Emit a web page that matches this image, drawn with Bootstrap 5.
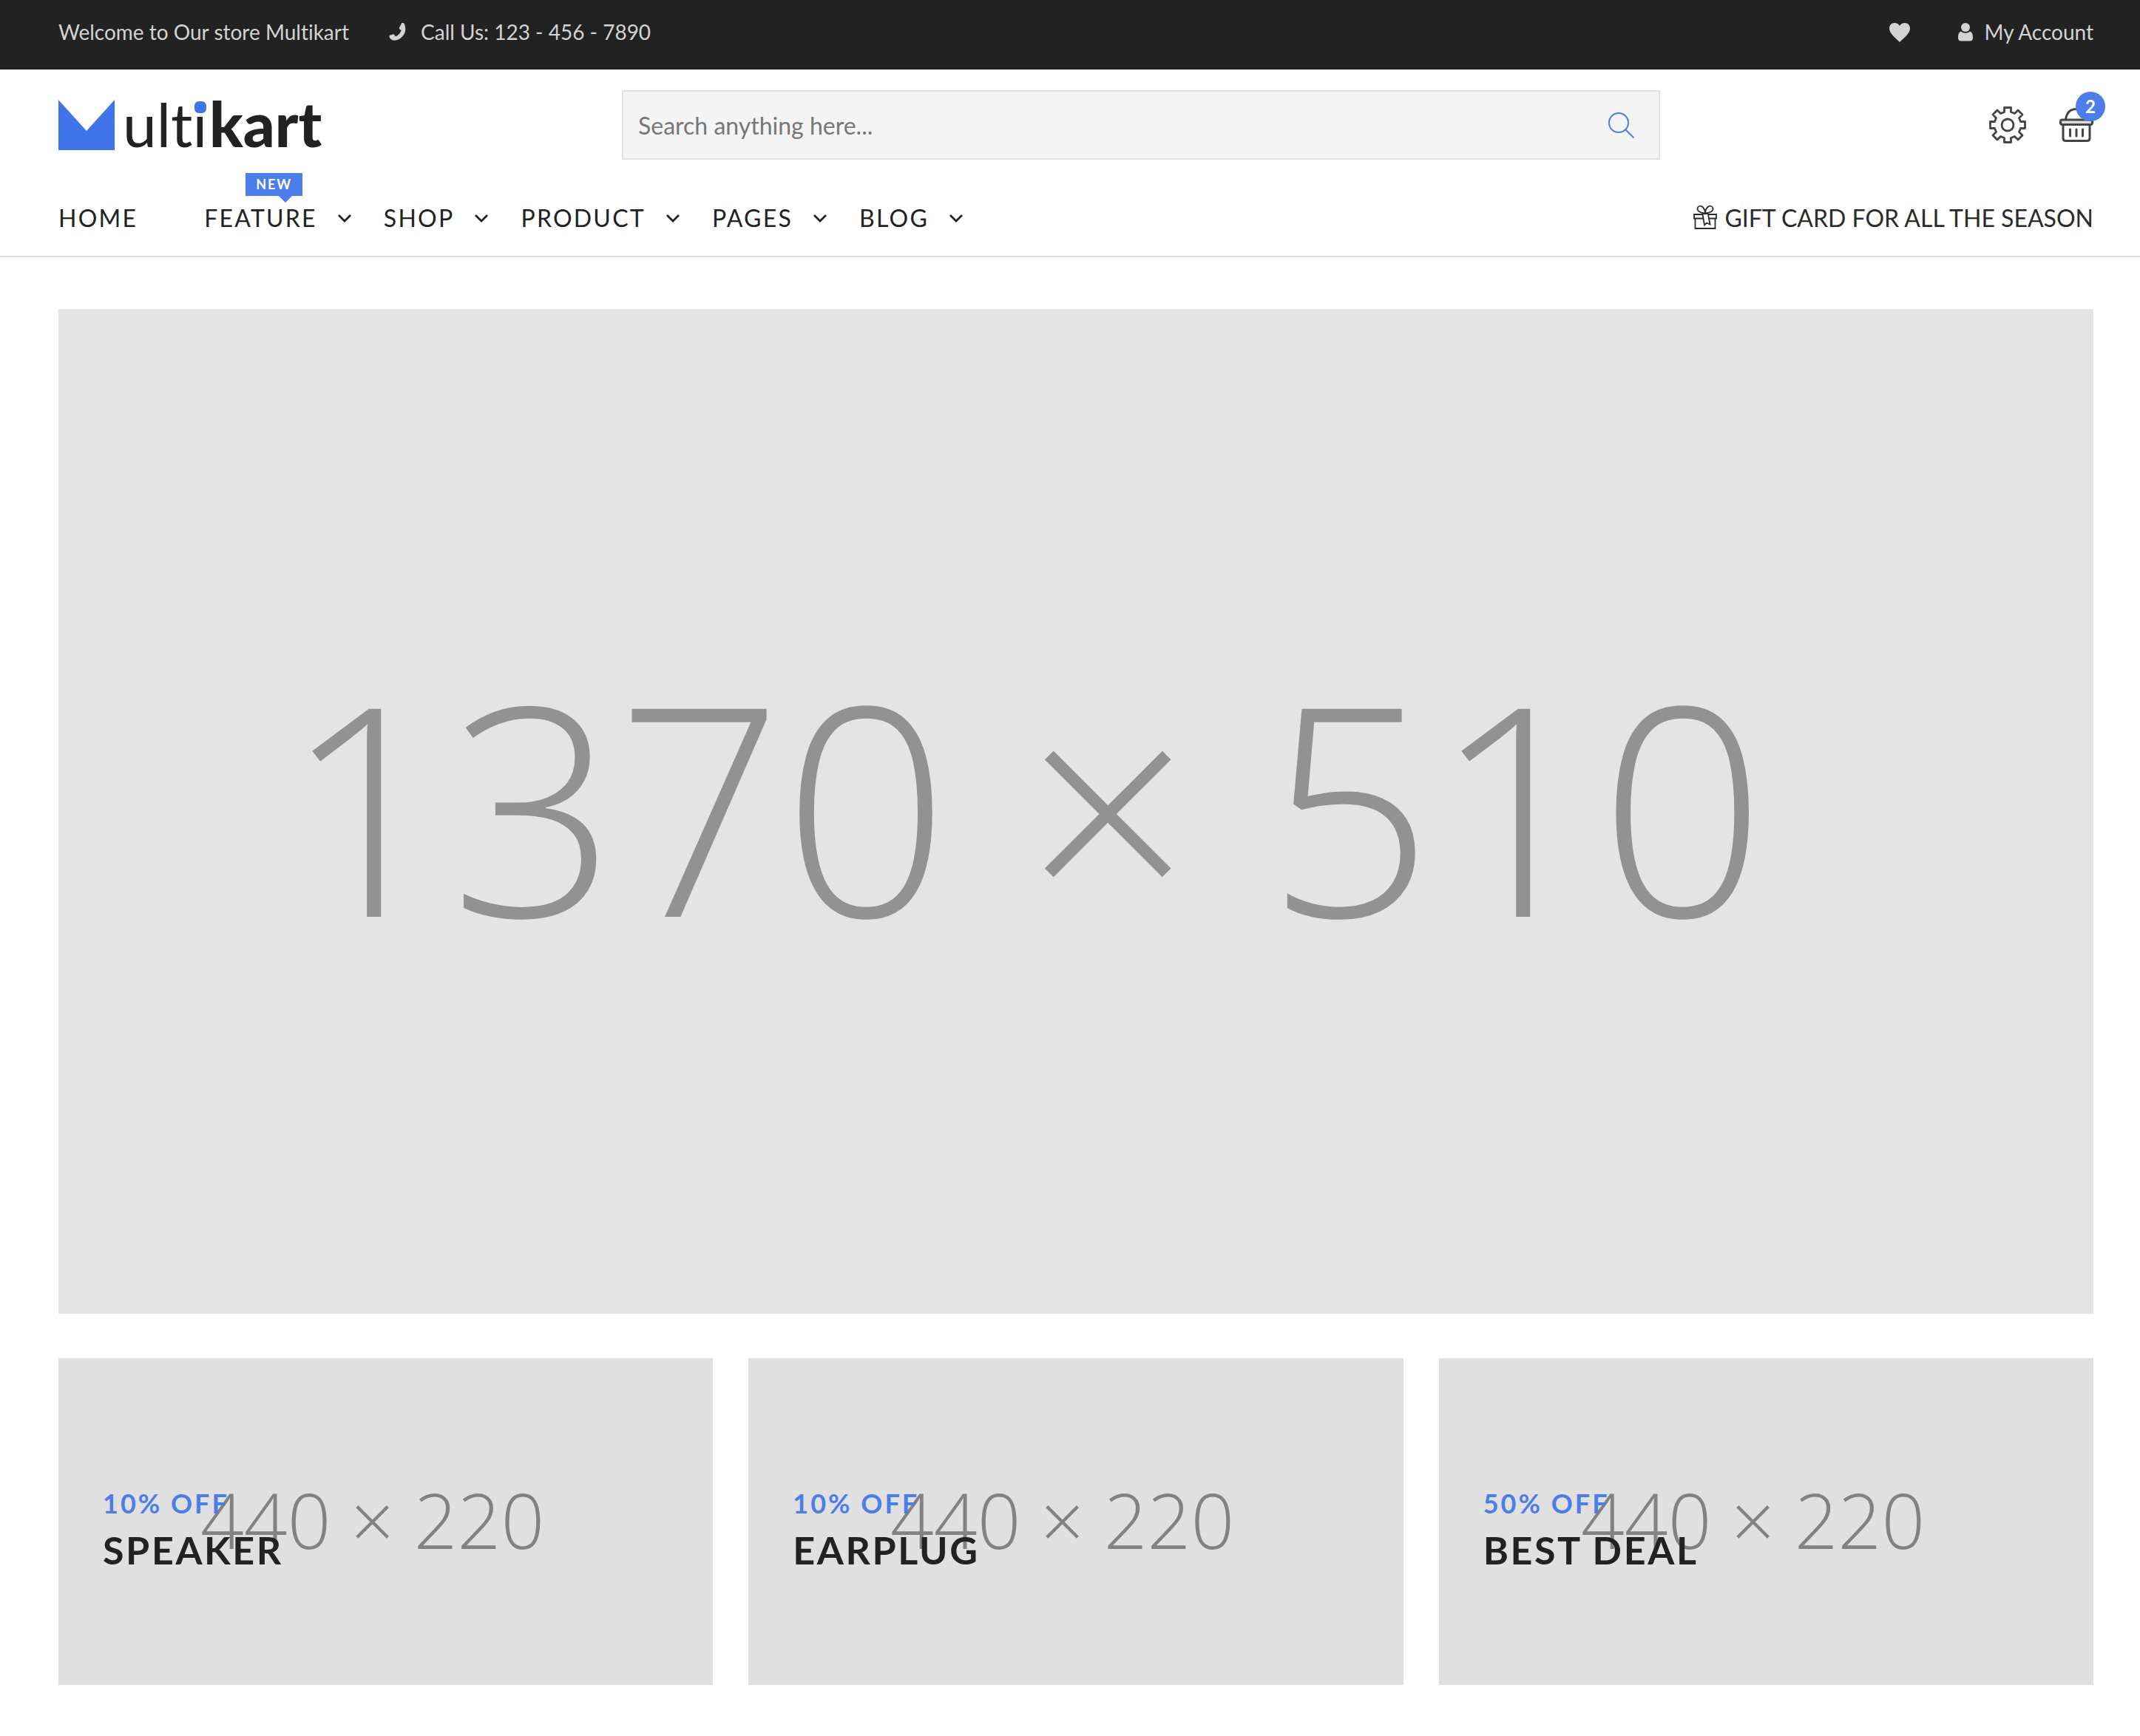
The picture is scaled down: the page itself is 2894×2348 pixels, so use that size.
<!DOCTYPE html>
<html lang="en">
<head>
<meta charset="utf-8">
<meta name="viewport" content="width=device-width, initial-scale=1">
<title>Multikart</title>
<link href="https://cdn.jsdelivr.net/npm/bootstrap@5.3.0/dist/css/bootstrap.min.css" rel="stylesheet">
<style>
:root { --brand: #4c7dea; --ink: #222222; }
body { font-family: Lato, sans-serif; color: var(--ink); font-size: 32px; line-height: 40px; background: #fff; font-variant-ligatures: none; }
a { color: inherit; text-decoration: none; }
svg { display: block; flex: none; }
.shell { padding-left: 79px; padding-right: 63px; }

.top-bar { background: #222; color: #d3d3d3; font-size: 28px; line-height: 34px; padding-top: 26px; padding-bottom: 34px; }
.top-gap { gap: 54px; }
.top-right { gap: 64px; }
.icon-gap { gap: 20px; }
.account-gap { gap: 16px; }

.site-header { border-bottom: 2px solid #ddd; }
.brand-row { display: grid; grid-template-columns: 762fr 1404fr 586fr; align-items: center; padding-top: 22px; padding-bottom: 22px; }
.search-box { background: #f4f4f4; border: 2px solid #e1e1e1; height: 94px; }
.search-box input { font-size: 32px; padding: 2px 0 0 20px; background: transparent; color: var(--ink); }
.search-box input:focus { background: transparent; box-shadow: none; }
.search-box input::placeholder { color: #777; opacity: 1; }
.search-box button { padding: 0 32px; border: 0; background: transparent; }
.tool-gap { gap: 45px; }
.cart-count { top: -22px; left: 22px; width: 40px; height: 40px; background: var(--brand); color: #fff; font-size: 24px; line-height: 40px; font-weight: 700; text-align: center; border-radius: 50%; }

.nav-row { height: 102px; }
.main-menu { letter-spacing: .07em; }
.main-menu li { padding-right: 43px; }
.main-menu li:first-child { padding-right: 90px; }
.main-menu a { display: flex; align-items: center; gap: 27px; position: relative; }
.new-tag { position: absolute; left: 56px; top: -41px; width: 77px; height: 31px; line-height: 31px; font-size: 18px; letter-spacing: 2px; font-weight: 700; background: var(--brand); color: #fff; text-align: center; }
.new-tag::after { content: ""; position: absolute; left: 45px; top: 31px; border: 9px solid transparent; border-bottom: 0; border-top-color: var(--brand); }
.gift-gap { gap: 10px; color: #2b2b2b; }

main { padding-top: 70px; padding-bottom: 69px; }
.hero-pic, .offer-pic { width: 100%; height: auto; }
.hero-pic { background: #e4e4e4; }
.offer-pic { background: #e0e0e0; }
.pic-size { font-family: "Open Sans", sans-serif; font-weight: 300; }
.offers { display: grid; grid-template-columns: repeat(3, 1fr); gap: 48px; margin-top: 60px; }
.offer-text { padding: 22px 60px 0; }
.offer-text h4 { color: var(--brand); font-size: 36px; line-height: 43px; font-weight: 700; letter-spacing: 3px; margin: 0 0 10px; }
.offer-text h2 { font-size: 52px; line-height: 62px; font-weight: 700; letter-spacing: .05em; margin: 0; }
</style>
<script src="https://cdn.jsdelivr.net/npm/bootstrap@5.3.0/dist/js/bootstrap.bundle.min.js"></script>
</head>
<body>

<svg width="0" height="0" class="position-absolute" aria-hidden="true">
  <symbol id="chev" viewBox="0 0 20 14"><path d="M2 3l8 8 8-8" fill="none" stroke="currentColor" stroke-width="2.800"/></symbol>
</svg>

<div class="top-bar shell d-flex justify-content-between align-items-center">
  <div class="d-flex top-gap">
    <span>Welcome to Our store Multikart</span>
    <span class="d-flex align-items-center icon-gap">
      <svg width="23" height="24" viewBox="0 0 23 24" fill="currentColor" aria-hidden="true"><path d="M17 .5c1.200-.5 2.500-.6 3.300 0 2 3.500 3 8.500.5 14-3 6-8.500 9.500-15.300 9C3 23 1 21 .5 18.500c-.2-1 .3-1.700 1.200-2.100l3.600-1c1-.2 1.700.1 2.200.9l1.200 2c4-1.300 7-4.500 7.800-8.500l-1.800-1c-.8-.5-1-1.200-.8-2.100z"/></svg>
      <span>Call Us: 123 - 456 - 7890</span>
    </span>
  </div>
  <div class="d-flex align-items-center top-right">
    <a href="#" aria-label="Wishlist">
      <svg width="30" height="28" viewBox="0 0 30 28" fill="currentColor" aria-hidden="true"><path d="M15 28C12 24.500 1 17 1 9.500 1 5 4 2 8 2c3 0 5.500 1.500 7 4 1.500-2.500 4-4 7-4 4 0 7 3 7 7.500C29 17 18 24.500 15 28z"/></svg>
    </a>
    <a href="#" class="d-flex align-items-center account-gap">
      <svg width="20" height="26" viewBox="0 0 20 26" fill="currentColor" aria-hidden="true"><circle cx="10" cy="7" r="6"/><path d="M4 12.500c3.500 3 8.500 3 12 0 3 1 4 4 4 8.500 0 3-1.500 4.500-4 4.500H4c-2.500 0-4-1.500-4-4.500 0-4.500 1-7.500 4-8.500z"/></svg>
      <span>My Account</span>
    </a>
  </div>
</div>

<header class="site-header">
  <div class="shell">
    <div class="brand-row">
      <a href="#" aria-label="Multikart home">
        <svg width="370" height="106" viewBox="0 -15 370 106" aria-hidden="true">
          <path d="M0 4l38 42L76 4v68H0z" fill="#4173e9"/>
          <text x="87" y="68" font-family="Lato" font-size="82" fill="#222">ultı</text>
          <text x="204" y="68" font-family="Lato" font-size="84" font-weight="900" fill="#222">kart</text>
          <rect x="184" y="6" width="16" height="16" rx="6" fill="#4173e9"/>
        </svg>
      </a>
      <form class="search-box d-flex" role="search">
        <input type="search" class="form-control border-0 rounded-0" placeholder="Search anything here..." aria-label="Search">
        <button type="button" aria-label="Search">
          <svg width="37" height="37" viewBox="0 0 37 37" fill="none" stroke="#4c7dea" stroke-width="2" aria-hidden="true"><circle cx="15" cy="15" r="13"/><path d="M24 24l11.500 11.500"/></svg>
        </button>
      </form>
      <div class="d-flex justify-content-end align-items-center tool-gap">
        <a href="#" aria-label="Settings">
          <svg width="50" height="50" viewBox="0 0 50 50" fill="none" stroke="#444" stroke-width="2.800" stroke-linejoin="round" aria-hidden="true"><circle cx="25" cy="25" r="8"/><path d="M20.500 1.500h9v6l5 2 4.500-4.500 6 6-4.500 4.500 2 5h6v9h-6l-2 5L45 39l-6 6-4.500-4.500-5 2v6h-9v-6l-5-2L11 45l-6-6 4.500-4.500-2-5h-6v-9h6l2-5L5 11l6-6 4.500 4.500 5-2z"/></svg>
        </a>
        <a href="#" class="position-relative" aria-label="Cart, 2 items">
          <svg width="46" height="46" viewBox="0 0 46 46" fill="none" stroke="#444" stroke-width="3" stroke-linejoin="round" stroke-linecap="round" aria-hidden="true"><path d="M8.500 15C10 6 15 1.500 23 1.500S36 6 37.500 15"/><rect x="1.500" y="16" width="43" height="6.500" rx="2.500" fill="#ddd"/><path d="M5 23v18q0 3.500 3.500 3.500h29q3.500 0 3.500-3.500V23M14.500 29v9M23 29v9M31.500 29v9"/></svg>
          <span class="cart-count position-absolute">2</span>
        </a>
      </div>
    </div>
    <div class="nav-row d-flex justify-content-between align-items-center">
      <nav aria-label="Main">
        <ul class="main-menu list-unstyled d-flex m-0">
          <li><a href="#">HOME</a></li>
          <li><a href="#">FEATURE <svg width="20" height="14" aria-hidden="true"><use href="#chev"/></svg><span class="new-tag">NEW</span></a></li>
          <li><a href="#">SHOP <svg width="20" height="14" aria-hidden="true"><use href="#chev"/></svg></a></li>
          <li><a href="#">PRODUCT <svg width="20" height="14" aria-hidden="true"><use href="#chev"/></svg></a></li>
          <li><a href="#">PAGES <svg width="20" height="14" aria-hidden="true"><use href="#chev"/></svg></a></li>
          <li><a href="#">BLOG <svg width="20" height="14" aria-hidden="true"><use href="#chev"/></svg></a></li>
        </ul>
      </nav>
      <a href="#" class="d-flex align-items-center gift-gap">
        <svg width="32" height="36" viewBox="0 0 32 36" fill="none" stroke="currentColor" stroke-width="1.800" aria-hidden="true"><path d="M1 13h30v5.500H1zM2.500 18.500h27V32h-27zM16 11.500C10 11.500 5 8.500 5.500 5 6 1.500 10 .5 12.500 3 15 5.500 16 8.500 16 11.500c0-3 1-6 3.500-8.500C22 .5 26 1.500 26.500 5 27 8.500 22 11.500 16 11.500z"/><path d="M12.500 13l2.500 14.500 3-3 4.500 2L20 13" fill="#fff"/></svg>
        <span>GIFT CARD FOR ALL THE SEASON</span>
      </a>
    </div>
  </div>
</header>

<main class="shell">
  <a href="#" class="d-block">
    <svg class="hero-pic" viewBox="0 0 2752 1359"><text class="pic-size" x="305" y="822" font-size="394" fill="#929292">1370 × 510</text></svg>
  </a>
  <section class="offers">
    <a href="#" class="position-relative">
      <svg class="offer-pic" viewBox="0 0 885 442"><text class="pic-size" x="192" y="258" font-size="103" fill="#828282">440 × 220</text></svg>
      <div class="offer-text position-absolute top-0 start-0 w-100 h-100 d-flex flex-column justify-content-center"><h4>10% OFF</h4><h2>SPEAKER</h2></div>
    </a>
    <a href="#" class="position-relative">
      <svg class="offer-pic" viewBox="0 0 885 442"><text class="pic-size" x="192" y="258" font-size="103" fill="#828282">440 × 220</text></svg>
      <div class="offer-text position-absolute top-0 start-0 w-100 h-100 d-flex flex-column justify-content-center"><h4>10% OFF</h4><h2>EARPLUG</h2></div>
    </a>
    <a href="#" class="position-relative">
      <svg class="offer-pic" viewBox="0 0 885 442"><text class="pic-size" x="192" y="258" font-size="103" fill="#828282">440 × 220</text></svg>
      <div class="offer-text position-absolute top-0 start-0 w-100 h-100 d-flex flex-column justify-content-center"><h4>50% OFF</h4><h2>BEST DEAL</h2></div>
    </a>
  </section>
</main>
</body>
</html>
